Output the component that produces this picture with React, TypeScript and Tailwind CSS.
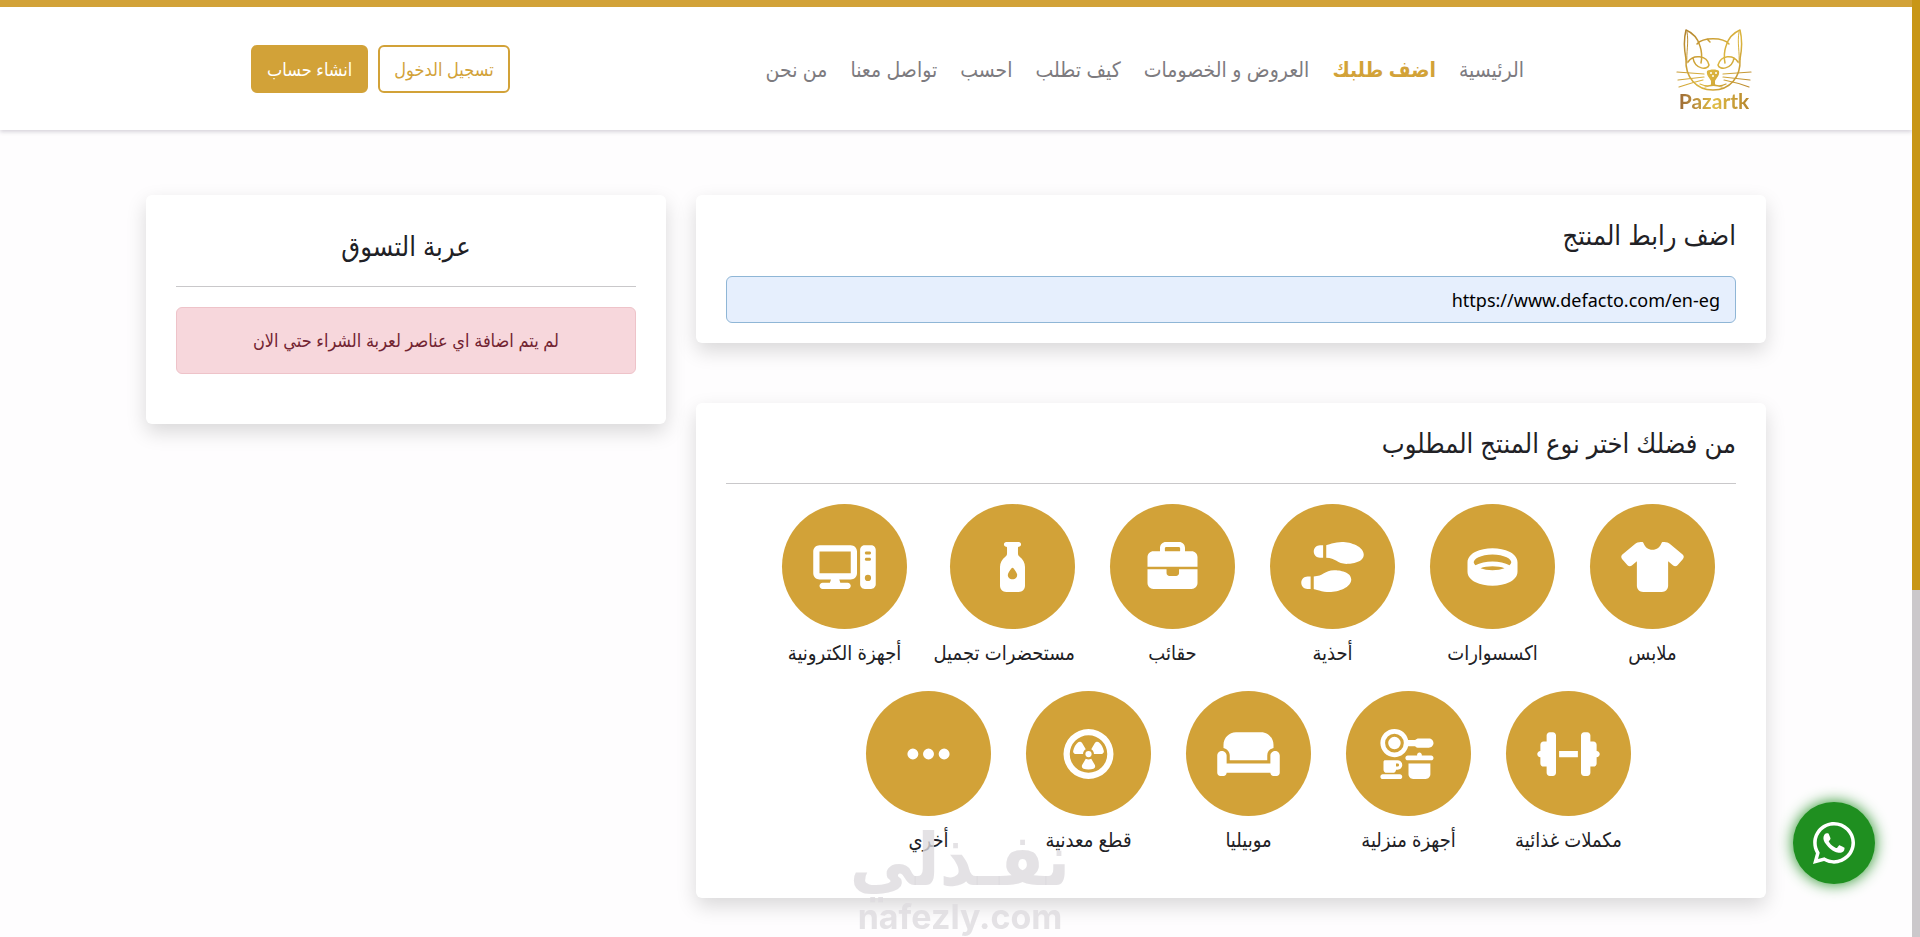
import React from 'react';
import {
  FaBottleDroplet,
  FaCircleRadiation,
  FaComputer,
  FaCouch,
  FaDumbbell,
  FaEllipsis,
  FaKitchenSet,
  FaRing,
  FaShirt,
  FaShoePrints,
  FaWhatsapp,
} from 'react-icons/fa6';

interface NavItem {
  label: string;
  active?: boolean;
}

interface Category {
  label: string;
  icon: React.ComponentType<{ className?: string }>;
}

const BriefcaseIcon: React.FC<{ className?: string }> = ({ className }) => (
  <svg viewBox="0 0 512 512" fill="currentColor" className={className} aria-hidden="true">
    <path
      fillRule="evenodd"
      d="M188 0H324C357 0 384 27 384 60V94H452C485 94 512 121 512 154V253H0V154C0 121 27 94 60 94H128V60C128 27 155 0 188 0ZM192 50C184 50 178 56 178 64V94H334V64C334 56 328 50 320 50Z"
    />
    <path d="M0 280H195V317C195 334 208 347 225 347H293C310 347 323 334 323 317V280H512V420C512 453 485 480 452 480H60C27 480 0 453 0 420Z" />
  </svg>
);

const navItems: NavItem[] = [
  { label: 'الرئيسية' },
  { label: 'اضف طلبك', active: true },
  { label: 'العروض و الخصومات' },
  { label: 'كيف تطلب' },
  { label: 'احسب' },
  { label: 'تواصل معنا' },
  { label: 'من نحن' },
];

const categories: Category[] = [
  { label: 'ملابس', icon: FaShirt },
  { label: 'اكسسوارات', icon: FaRing },
  { label: 'أحذية', icon: FaShoePrints },
  { label: 'حقائب', icon: BriefcaseIcon },
  { label: 'مستحضرات تجميل', icon: FaBottleDroplet },
  { label: 'أجهزة الكترونية', icon: FaComputer },
  { label: 'مكملات غذائية', icon: FaDumbbell },
  { label: 'أجهزة منزلية', icon: FaKitchenSet },
  { label: 'موبيليا', icon: FaCouch },
  { label: 'قطع معدنية', icon: FaCircleRadiation },
  { label: 'أخري', icon: FaEllipsis },
];

const Logo: React.FC = () => (
  <a href="#" className="flex w-[76px] flex-col items-center">
    <svg viewBox="0 0 76 64" className="h-16 w-full" fill="none" strokeLinecap="round" strokeLinejoin="round">
      <defs>
        <linearGradient id="gold" x1="0" y1="0" x2="76" y2="64" gradientUnits="userSpaceOnUse">
          <stop offset="0" stopColor="#a87a2c" />
          <stop offset="0.3" stopColor="#c99c35" />
          <stop offset="0.55" stopColor="#dcb63f" />
          <stop offset="1" stopColor="#b5822c" />
        </linearGradient>
      </defs>
      <g stroke="url(#gold)" strokeWidth="1.5">
        <path d="M10 30C8 20 8 9 10 1C17 4 22 10 24 17C26 23 26 29 25 34" />
        <path d="M64 30C66 20 66 9 64 1C57 4 52 10 50 17C48 23 48 29 49 34" />
        <path d="M11 3C13 14 10 24 11 34M63 3C61 14 64 24 63 34" strokeWidth="1" />
        <path d="M21 15C27 8 47 8 53 15M31 10L34 13" />
        <path d="M10 30C9 48 20 61 37 61C54 61 65 48 64 30" />
        <path d="M12 33C17 25 31 26 33 36C32 41 19 41 17 29" />
        <path d="M62 33C57 25 45 26 42 36C43 41 56 41 58 29" />
        <g strokeWidth="1.2">
          <path d="M1 43L28 45M2 51L28 48M3 58C12 55 18 53 27 51" />
          <path d="M75 43L47 45M74 51L47 48M73 58C65 55 58 53 48 51" />
          <path d="M24 55C31 58 35 57 37 55C40 57 44 58 50 55M29 58C34 56 41 56 46 58" />
        </g>
      </g>
      <path d="M31 42C34 40 41 40 43 42C44 47 40 49 39 52V56H35V52C34 49 30 47 31 42Z" fill="url(#gold)" />
      <g fill="#fff">
        <circle cx="35" cy="44" r="1" />
        <circle cx="40" cy="44" r="1" />
        <circle cx="37" cy="47" r="1" />
      </g>
    </svg>
    <span className="bg-linear-to-r from-[#9c6a35] via-[#e0bd45] to-[#b5852c] bg-clip-text font-['Lato',sans-serif] text-[21px] leading-4 font-bold text-transparent">
      Pazartk
    </span>
  </a>
);

const Header: React.FC = () => (
  <header className="border-t-[7px] border-[#d2a238] bg-white shadow-[0_2px_4px_rgba(60,50,80,0.2)]">
    <div className="flex h-[123px] items-center pr-[160px] pl-[251px]">
      <Logo />
      <nav className="mr-[152px] flex gap-[23px] text-[21px] leading-8 whitespace-nowrap">
        {navItems.map((item) => (
          <a
            key={item.label}
            href="#"
            className={item.active ? 'font-bold text-[#d2a238]' : 'text-[#7d7b7f]'}
          >
            {item.label}
          </a>
        ))}
      </nav>
      <div className="mr-auto flex gap-[10px] text-lg whitespace-nowrap">
        <button className="h-12 rounded-md border-2 border-[#d2a238] px-[14px] text-[#d2a238]">
          تسجيل الدخول
        </button>
        <button className="h-12 rounded-md border-2 border-[#d2a238] bg-[#d2a238] px-[14px] text-white">
          انشاء حساب
        </button>
      </div>
    </div>
  </header>
);

const Card: React.FC<{ className?: string; children: React.ReactNode }> = ({ className = '', children }) => (
  <section className={`rounded-md bg-white px-[30px] shadow-[0_8px_20px_rgba(0,0,0,0.15)] ${className}`}>
    {children}
  </section>
);

const LinkCard: React.FC = () => (
  <Card className="pt-[22px] pb-5">
    <label htmlFor="product-link" className="block text-[27px] leading-9">
      اضف رابط المنتج
    </label>
    <input
      id="product-link"
      type="text"
      defaultValue="https://www.defacto.com/en-eg"
      className="mt-[23px] h-[47px] w-full rounded-md border border-[#8fb6d6] bg-[#e6effd] px-[15px] text-lg text-black outline-none"
    />
  </Card>
);

const CategoryCard: React.FC = () => (
  <Card className="pt-[22px] pb-5">
    <h2 className="text-[27px] leading-9">من فضلك اختر نوع المنتج المطلوب</h2>
    <hr className="mt-[22px] border-[#c9c8ca]" />
    <div className="mt-5 flex flex-wrap justify-center">
      {categories.map(({ label, icon: Icon }) => (
        <button key={label} className="mb-[22px] ml-[35px] max-w-[133px] min-w-[125px] text-xl whitespace-nowrap">
          <span className="flex size-[125px] items-center justify-center rounded-full bg-[#d2a238] text-white">
            <Icon className="h-[50px] w-[63px]" />
          </span>
          <span className="mt-2 block leading-8">{label}</span>
        </button>
      ))}
    </div>
  </Card>
);

const CartCard: React.FC = () => (
  <Card className="pt-[33px] pb-[50px] text-center">
    <h2 className="text-[27px] leading-9">عربة التسوق</h2>
    <hr className="mt-[22px] border-[#c9c8ca]" />
    <p className="mt-5 rounded-md border border-[#eec3c9] bg-[#f7d7dc] py-4 text-lg leading-[33px] text-[#722432]">
      لم يتم اضافة اي عناصر لعربة الشراء حتي الان
    </p>
  </Card>
);

const Watermark: React.FC = () => (
  <div className="pointer-events-none fixed bottom-0 left-1/2 flex -translate-x-1/2 flex-col items-center font-bold whitespace-nowrap text-[#dddbdf]/80">
    <span className="mb-1 text-[72px] leading-[72px]">نفـذلي</span>
    <span className="font-['Inter',sans-serif] text-[34px] leading-10">nafezly.com</span>
  </div>
);

export default function App() {
  return (
    <div
      dir="rtl"
      className="min-h-screen bg-[#fefdfe] pr-2 font-['Noto_Sans','DejaVu_Sans_Condensed',sans-serif] text-[#212125]"
    >
      <Header />
      <main className="mx-auto grid max-w-[1650px] grid-cols-3 items-start gap-[30px] px-[15px] pt-[65px]">
        <div className="col-span-2 flex flex-col gap-[60px]">
          <LinkCard />
          <CategoryCard />
        </div>
        <CartCard />
      </main>

      <Watermark />

      <a
        href="#"
        aria-label="WhatsApp"
        className="fixed right-[45px] bottom-[53px] flex size-[82px] items-center justify-center rounded-full bg-[#1f8f20] text-white shadow-[0_0_15px_#1f8f20]"
      >
        <FaWhatsapp className="size-12" />
      </a>

      <div className="fixed inset-y-0 right-0 w-2 bg-[#cbc8cb]">
        <div className="h-[63%] bg-[#c89616]" />
      </div>
    </div>
  );
}
